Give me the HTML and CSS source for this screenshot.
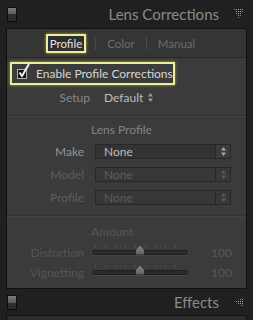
FILE: index.html
```html
<!DOCTYPE html>
<html lang="en">
<head>
    <meta charset="UTF-8">
    <title>Lens Corrections</title>
    <link rel="stylesheet" href="styles.css">
</head>
<body>
    <div class="header">
        <span class="toggle"></span>
        <span class="title">Lens Corrections</span>
        <svg class="expand" width="10" height="10" viewBox="0 0 10 10">
            <defs>
                <pattern id="dots" width="2" height="2" patternUnits="userSpaceOnUse">
                    <rect width="1" height="1" fill="#a0a0a0"/>
                </pattern>
            </defs>
            <polygon points="0,0 10,0 5,10" fill="url(#dots)"/>
        </svg>
    </div>

    <div class="panel">
        <div class="tabs">
            <span class="tab active">Profile</span>
            <span class="tab-sep"></span>
            <span class="tab">Color</span>
            <span class="tab-sep"></span>
            <span class="tab">Manual</span>
        </div>

        <div class="enable">
            <span class="checkbox">
                <svg width="14" height="16" viewBox="0 0 14 16">
                    <path d="M2.5 9.5 L5 13 L12 1" fill="none" stroke="#f2f2f2" stroke-width="2"/>
                </svg>
            </span>
            <span>Enable Profile Corrections</span>
        </div>

        <div class="setup">
            <span class="setup-label">Setup</span>
            <span class="setup-value">Default</span>
            <svg class="updown" width="5" height="9" viewBox="0 0 5 9">
                <polygon points="2.5,0 5,3.5 0,3.5" fill="#9a9a9a"/>
                <polygon points="0,5.5 5,5.5 2.5,9" fill="#9a9a9a"/>
            </svg>
        </div>

        <div class="section">
            <div class="section-title">Lens Profile</div>
            <div class="field">
                <span class="field-label">Make</span>
                <span class="select">
                    <span class="select-text">None</span>
                    <span class="select-btn">
                        <svg width="5" height="9" viewBox="0 0 5 9">
                            <polygon points="2.5,0 5,3.5 0,3.5" fill="#a8a8a8"/>
                            <polygon points="0,5.5 5,5.5 2.5,9" fill="#a8a8a8"/>
                        </svg>
                    </span>
                </span>
            </div>
            <div class="field disabled">
                <span class="field-label">Model</span>
                <span class="select">
                    <span class="select-text">None</span>
                    <span class="select-btn">
                        <svg width="5" height="9" viewBox="0 0 5 9">
                            <polygon points="2.5,0 5,3.5 0,3.5" fill="#5a5a5a"/>
                            <polygon points="0,5.5 5,5.5 2.5,9" fill="#5a5a5a"/>
                        </svg>
                    </span>
                </span>
            </div>
            <div class="field disabled">
                <span class="field-label">Profile</span>
                <span class="select">
                    <span class="select-text">None</span>
                    <span class="select-btn">
                        <svg width="5" height="9" viewBox="0 0 5 9">
                            <polygon points="2.5,0 5,3.5 0,3.5" fill="#5a5a5a"/>
                            <polygon points="0,5.5 5,5.5 2.5,9" fill="#5a5a5a"/>
                        </svg>
                    </span>
                </span>
            </div>
        </div>

        <div class="section amount">
            <div class="section-title">Amount</div>
            <div class="slider-row">
                <span class="field-label">Distortion</span>
                <span class="slider"><span class="thumb"></span></span>
                <span class="slider-value">100</span>
            </div>
            <div class="slider-row">
                <span class="field-label">Vignetting</span>
                <span class="slider"><span class="thumb"></span></span>
                <span class="slider-value">100</span>
            </div>
        </div>
    </div>

    <div class="header header-closed">
        <span class="toggle"></span>
        <span class="title">Effects</span>
        <svg class="expand" width="10" height="10" viewBox="0 0 10 10">
            <defs>
                <pattern id="dots2" width="2" height="2" patternUnits="userSpaceOnUse">
                    <rect width="1" height="1" fill="#a0a0a0"/>
                </pattern>
            </defs>
            <polygon points="10,0 10,10 0,5" fill="url(#dots2)"/>
        </svg>
    </div>

    <div class="next-panel"></div>
</body>
</html>
```

FILE: styles.css
```css
* {
    box-sizing: border-box;
}
body {
    margin: 0;
    width: 253px;
    height: 320px;
    overflow: hidden;
    background-color: #202020;
    font-family: Lato, "Open Sans", sans-serif;
    font-size: 12px;
    color: #999;
    white-space: nowrap;
}
.header {
    height: 28px;
    display: flex;
    align-items: center;
    padding: 0 9px 0 7px;
}
.header-closed {
    height: 26px;
}
.toggle {
    width: 10px;
    height: 15px;
    border: 1px solid #0e0e0e;
    background: linear-gradient(#7a7a7a, #5a5a5a 50%, #303030 50%, #2a2a2a);
}
.title {
    flex: 1;
    text-align: right;
    font-size: 15px;
    color: #8a8a8a;
    margin-right: 15px;
}
.panel {
    margin: 0 6px;
    border: 1px solid #101010;
    background-color: #3b3b3b;
    padding-bottom: 6px;
}
.tabs {
    height: 29px;
    display: flex;
    align-items: center;
    justify-content: center;
    gap: 9px;
    background-color: #353535;
    border-bottom: 1px solid #2a2a2a;
    padding-right: 10px;
}
.tab {
    color: #6c6c6c;
    font-size: 11.5px;
    padding: 0 2px;
}
.tab.active {
    color: #e2e2e2;
    background-color: #2e2e2e;
    border: 2px solid #eeee9a;
    box-shadow: 0 0 3px #a8a850;
    line-height: 13px;
    padding: 1px 2px;
}
.tab-sep {
    width: 1px;
    height: 13px;
    background-color: #4a4a4a;
}
.enable {
    margin: 4px 0 0 3px;
    width: 165px;
    height: 23px;
    border: 2px solid #eeee9a;
    box-shadow: 0 0 3px #a8a850;
    display: flex;
    align-items: center;
    color: #d6d6d6;
    gap: 9px;
    padding-left: 5px;
}
.checkbox {
    width: 10px;
    height: 10px;
    border: 1px solid #b0b0b0;
    background-color: #111;
    position: relative;
}
.checkbox svg {
    position: absolute;
    left: -1px;
    top: -7px;
}
.setup {
    height: 18px;
    display: flex;
    align-items: center;
    margin-top: 3px;
    padding-left: 46px;
    box-sizing: content-box;
    padding-bottom: 9px;
}
.setup-label {
    color: #888;
    width: 37px;
    text-align: right;
}
.setup-value {
    color: #bcbcbc;
    margin-left: 14px;
    margin-right: 5px;
}
.section {
    border-top: 1px solid #333;
    box-shadow: inset 0 1px 0 #424242;
    padding: 6px 0 10px;
}
.section-title {
    line-height: 16px;
    padding-left: 84px;
    color: #848484;
    margin-bottom: 6px;
}
.field {
    display: flex;
    align-items: center;
    height: 15px;
    margin-bottom: 8px;
}
.field:last-child {
    margin-bottom: 0;
}
.field-label {
    width: 77px;
    text-align: right;
    color: #959595;
}
.select {
    margin-left: 11px;
    width: 136px;
    height: 15px;
    border: 1px solid #272727;
    background-color: #333;
    display: flex;
    align-items: center;
}
.select-text {
    flex: 1;
    padding-left: 8px;
    color: #bdbdbd;
}
.select-btn {
    width: 15px;
    height: 13px;
    border-left: 1px solid #272727;
    background-color: #3c3c3c;
    display: flex;
    align-items: center;
    justify-content: center;
}
.disabled .field-label,
.disabled .select-text {
    color: #5e5e5e;
}
.disabled .select {
    background-color: #373737;
}
.disabled .select-btn {
    background-color: #383838;
}
.amount {
    padding: 8px 0 0;
}
.amount .section-title {
    color: #575757;
    margin-bottom: 2px;
}
.slider-row {
    height: 20px;
    display: flex;
    align-items: center;
}
.slider-row .field-label {
    color: #555;
}
.slider {
    margin-left: 8px;
    width: 96px;
    height: 5px;
    border: 1px solid #202020;
    border-radius: 3px;
    background-color: #2b2b2b;
    box-shadow: 0 1px 0 #474747;
    position: relative;
}
.slider::before {
    content: "";
    position: absolute;
    left: 2px;
    right: 4px;
    top: -6px;
    height: 3px;
    background: repeating-linear-gradient(90deg, #4e4e4e 0 1px, transparent 1px 10px);
}
.thumb {
    position: absolute;
    left: 43px;
    top: -5px;
    width: 8px;
    height: 9px;
    background: linear-gradient(#858585, #5e5e5e);
    clip-path: polygon(50% 0, 100% 50%, 100% 100%, 0 100%, 0 50%);
}
.slider-value {
    flex: 1;
    text-align: right;
    padding-right: 14px;
    color: #575757;
}
.next-panel {
    margin: 0 6px;
    height: 6px;
    border: 1px solid #101010;
    background-color: #2c2c2c;
}
```
